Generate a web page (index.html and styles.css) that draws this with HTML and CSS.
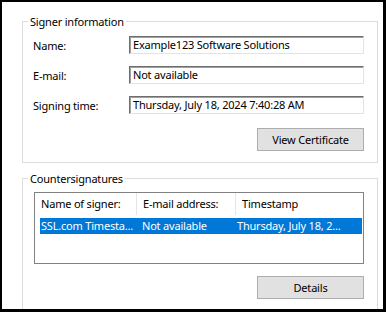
FILE: index.html
```html
<!DOCTYPE html>
<html lang="en">
<head>
  <meta charset="UTF-8" />
  <title>Digital Signature Details</title>
  <link rel="stylesheet" href="styles.css">
</head>
<body>
  <div class="window">

    <!-- Signer block -->
    <fieldset class="group">
      <legend>Signer information</legend>
      <div class="fields">
        <div class="field-row">
          <span class="label">Name:</span>
          <div class="edit">Example123 Software Solutions</div>
        </div>
        <div class="field-row">
          <span class="label">E-mail:</span>
          <div class="edit">Not available</div>
        </div>
        <div class="field-row">
          <span class="label">Signing time:</span>
          <div class="edit">Thursday, July 18, 2024 7:40:28 AM</div>
        </div>
      </div>
      <div class="actions">
        <button>View Certificate</button>
      </div>
    </fieldset>

    <!-- Countersignatures block -->
    <fieldset class="group group-counter">
      <legend>Countersignatures</legend>
      <div class="listview">
        <div class="lv-header">
          <div class="col col-name">Name of signer:</div>
          <div class="col col-mail">E-mail address:</div>
          <div class="col col-time">Timestamp</div>
        </div>
        <div class="lv-row selected">
          <div class="col col-name">SSL.com Timesta...</div>
          <div class="col col-mail">Not available</div>
          <div class="col col-time">Thursday, July 18, 2...</div>
        </div>
      </div>
      <div class="actions actions-details">
        <button>Details</button>
      </div>
    </fieldset>

  </div>
</body>
</html>
```

FILE: styles.css
```css
body {
  margin: 0;
  padding: 0;
  background-color: #fff;
  font-family: "Noto Sans", sans-serif;
  font-size: 11px;
  letter-spacing: -0.2px;
  color: #000;
}
.window {
  width: 386px;
  height: 312px;
  box-sizing: border-box;
  border-style: solid;
  border-color: #000;
  border-width: 2px 3px 3px 2px;
  padding: 12px 5px 0 20px;
  overflow: hidden;
  background-color: #fff;
}
.group {
  margin: 0;
  border: 1px solid #dcdcdc;
  padding: 0 13px 11px 10px;
}
.group legend {
  margin-left: -5px;
  padding: 0 2px;
  line-height: 15px;
}
.fields {
  display: flex;
  flex-direction: column;
  gap: 12px;
  margin-top: 7px;
}
.field-row {
  display: flex;
  align-items: center;
  height: 18px;
}
.label {
  width: 96px;
  flex: none;
}
.edit {
  flex: 1;
  height: 18px;
  box-sizing: border-box;
  border-style: solid;
  border-width: 1px;
  border-color: #6e6e6e #e3e3e3 #e3e3e3 #6e6e6e;
  box-shadow: inset 1px 1px 0 #a0a0a0;
  padding: 0 2px 0 3px;
  line-height: 16px;
  white-space: nowrap;
  overflow: hidden;
}
.actions {
  display: flex;
  justify-content: flex-end;
  margin-top: 14px;
}
button {
  width: 107px;
  height: 23px;
  background-color: #e1e1e1;
  border: 1px solid #adadad;
  font-family: inherit;
  font-size: 11px;
  letter-spacing: -0.2px;
  color: #000;
  padding: 0;
}
.group-counter {
  margin-top: 8px;
  height: 200px;
}
.listview {
  margin-top: 6px;
  margin-left: 1px;
  height: 72px;
  box-sizing: border-box;
  border: 1px solid #828282;
  padding-right: 1px;
}
.lv-header,
.lv-row {
  display: flex;
}
.lv-header {
  height: 22px;
  line-height: 22px;
}
.lv-header .col {
  border-right: 1px solid #e5e5e5;
}
.lv-header .col-time {
  border-right: none;
}
.col {
  padding-left: 6px;
  white-space: nowrap;
  overflow: hidden;
  box-sizing: border-box;
}
.col-name {
  width: 102px;
}
.col-mail {
  width: 99px;
}
.col-time {
  flex: 1;
}
.lv-row {
  margin-top: 3px;
  height: 16px;
  line-height: 16px;
}
.lv-row.selected {
  margin-left: 5px;
  background-color: #0078d7;
  color: #fff;
}
.lv-row.selected .col {
  padding-left: 1px;
}
.lv-row.selected .col-name {
  width: 97px;
}
.lv-row.selected .col-mail {
  padding-left: 5px;
}
.actions-details {
  margin-top: 12px;
}
```
